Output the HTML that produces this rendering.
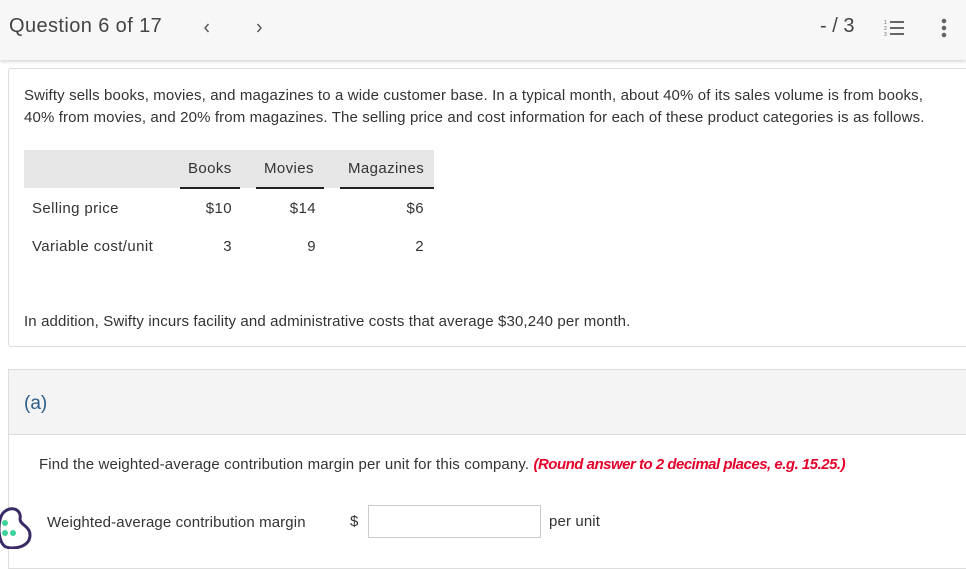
<!DOCTYPE html>
<html><head><meta charset="utf-8"><style>
*{margin:0;padding:0;box-sizing:border-box}
body{width:966px;height:549px;overflow:hidden;background:#fff;font-family:"Liberation Sans",sans-serif;color:#333;position:relative}
.hdr{position:absolute;left:0;top:0;width:966px;height:60px;background:#f7f7f7;box-shadow:0 2px 3px rgba(0,0,0,.15)}
.abs{position:absolute;white-space:nowrap}
.card{position:absolute;left:8px;top:68px;width:970px;height:279px;border:1px solid #ddd;border-radius:3px;background:#fff}
.p{font-size:15px;letter-spacing:0.13px;line-height:22px}
.th{position:absolute;top:150px;left:24px;width:410px;height:38px;background:#e6e6e6}
.ul{position:absolute;top:187px;height:2px;background:#222}
.t{font-size:15px;letter-spacing:0.4px}
.sec{position:absolute;left:8px;top:369px;width:970px;height:200px;border:1px solid #ddd;background:#fff}
.sech{position:absolute;left:0;top:0;width:100%;height:65px;background:#f4f4f4;border-bottom:1px solid #ddd}
</style></head><body>
<div class="hdr">
<div class="abs" style="left:9px;top:15px;font-size:20px;color:#444;letter-spacing:0.4px">Question 6 of 17</div>
<svg class="abs" style="left:202px;top:22px" width="10" height="12"><path d="M6.5 2 L3 6 L6.5 10" fill="none" stroke="#555" stroke-width="1.4"/></svg>
<svg class="abs" style="left:254px;top:22px" width="10" height="12"><path d="M3.5 2 L7 6 L3.5 10" fill="none" stroke="#555" stroke-width="1.4"/></svg>
<div class="abs" style="left:820px;top:15px;font-size:20px;color:#444">- / 3</div>
<svg class="abs" style="left:884px;top:19px" width="22" height="18"><g fill="#666"><rect x="6" y="2" width="14" height="2"/><rect x="6" y="8" width="14" height="2"/><rect x="6" y="14" width="14" height="2"/><text x="0" y="5" font-size="5" font-family="Liberation Sans">1</text><text x="0" y="11" font-size="5" font-family="Liberation Sans">2</text><text x="0" y="17" font-size="5" font-family="Liberation Sans">3</text></g></svg>
<svg class="abs" style="left:940px;top:17px" width="8" height="22"><g fill="#666"><circle cx="4" cy="4" r="2.3"/><circle cx="4" cy="11" r="2.3"/><circle cx="4" cy="18" r="2.3"/></g></svg>
</div>
<div class="card"></div>
<div class="abs p" style="left:24px;top:85px">Swifty sells books, movies, and magazines to a wide customer base. In a typical month, about 40% of its sales volume is from books,</div>
<div class="abs p" style="left:24px;top:107px">40% from movies, and 20% from magazines. The selling price and cost information for each of these product categories is as follows.</div>
<div class="th"></div>
<div class="ul" style="left:180px;width:60px"></div>
<div class="ul" style="left:256px;width:68px"></div>
<div class="ul" style="left:340px;width:94px"></div>
<div class="abs t" style="left:188px;top:160px">Books</div>
<div class="abs t" style="left:264px;top:160px">Movies</div>
<div class="abs t" style="left:348px;top:160px">Magazines</div>
<div class="abs t" style="left:32px;top:200px">Selling price</div>
<div class="abs t" style="left:32px;top:238px">Variable cost/unit</div>
<div class="abs t" style="right:734px;top:200px">$10</div>
<div class="abs t" style="right:650px;top:200px">$14</div>
<div class="abs t" style="right:542px;top:200px">$6</div>
<div class="abs t" style="right:734px;top:238px">3</div>
<div class="abs t" style="right:650px;top:238px">9</div>
<div class="abs t" style="right:542px;top:238px">2</div>
<div class="abs p" style="left:24px;top:311px">In addition, Swifty incurs facility and administrative costs that average $30,240 per month.</div>
<div class="sec"><div class="sech"></div></div>
<div class="abs" style="left:24px;top:393px;font-size:19px;color:#2a5d8a">(a)</div>
<div class="abs p" style="left:39px;top:454px">Find the weighted-average contribution margin per unit for this company. <b style="color:#e4002b;font-style:italic;letter-spacing:-0.5px">(Round answer to 2 decimal places, e.g. 15.25.)</b></div>
<div class="abs p" style="left:47px;top:512px">Weighted-average contribution margin</div>
<div class="abs p" style="left:350px;top:511px">$</div>
<div class="abs" style="left:368px;top:505px;width:173px;height:33px;border:1px solid #ccc;background:#fff"></div>
<div class="abs p" style="left:549px;top:511px">per unit</div>
<svg class="abs" style="left:0;top:506px" width="34" height="43"><path d="M4 6 C12 -1 22 4 20 13 C20 19 30 20 30 29 C30 40 16 44 6 41 C-3 37 -3 12 4 6Z" fill="#fff" stroke="#3a2b66" stroke-width="3"/><circle cx="5" cy="17" r="3" fill="#3ed39a"/><circle cx="5" cy="27" r="3" fill="#3ed39a"/><circle cx="13" cy="27" r="3" fill="#3ed39a"/></svg>
</body></html>
